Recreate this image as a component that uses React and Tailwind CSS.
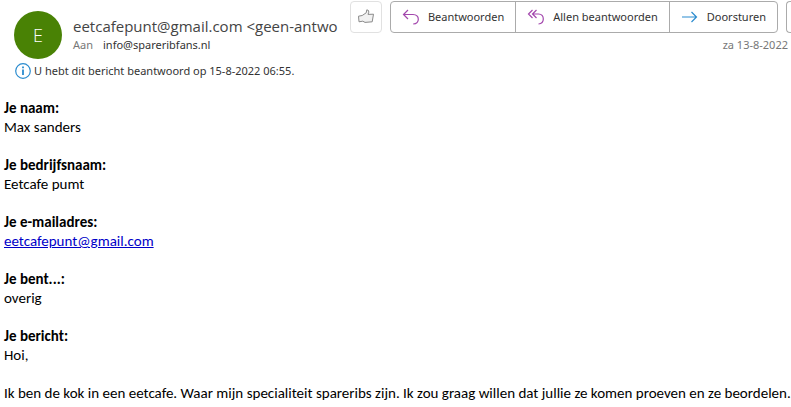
const fields = [
  { label: "Je naam:", value: "Max sanders" },
  { label: "Je bedrijfsnaam:", value: "Eetcafe pumt" },
  { label: "Je e-mailadres:", value: "eetcafepunt@gmail.com", isLink: true },
  { label: "Je bent...:", value: "overig" },
  { label: "Je bericht:", value: "Hoi," },
];

const ThumbIcon = () => (
  <svg width="18" height="18" viewBox="0 0 18 18" fill="#f1f1f1" stroke="#8a8a8a" strokeLinejoin="round">
    <path d="M1.5 8.2L5.2 7.5L9.2 4.8L9.8 1.8Q12.2 2 11.8 4.2L11 6.4L16.5 6.2L15.2 13.8L8 14.4L5.8 13.2L2 13.8Z" />
  </svg>
);

const ReplyIcon = () => (
  <svg width="18" height="18" viewBox="0 0 18 18" fill="none" stroke="#a347ad" strokeWidth="1.2">
    <path d="M6 2L1.5 6.5L6 11M1.5 6.5H11Q16.3 6.8 16.3 11.2Q16.3 15.6 11.2 16" />
  </svg>
);

const ReplyAllIcon = () => (
  <svg width="18" height="18" viewBox="0 0 18 18" fill="none" stroke="#a347ad" strokeWidth="1.2">
    <path d="M5.5 2L1.5 6L5.5 10M9.5 2L5.5 6L9.5 10M5.5 6H11.5Q16.3 6.3 16.3 11Q16.3 15.6 11.5 16" />
  </svg>
);

const ForwardIcon = () => (
  <svg width="18" height="18" viewBox="0 0 18 18" fill="none" stroke="#2b8ccf" strokeWidth="1.2">
    <path d="M1 9H15.5M10.5 4L15.5 9L10.5 14" />
  </svg>
);

const InfoIcon = () => (
  <svg width="16" height="16" viewBox="0 0 16 16" fill="none" stroke="#2b8ccf" className="shrink-0">
    <circle cx="8" cy="8" r="7.3" strokeWidth="1.2" />
    <path d="M8 6.5V12M8 3.5V5.2" strokeWidth="1.8" />
  </svg>
);

const actions = [
  { label: "Beantwoorden", icon: <ReplyIcon /> },
  { label: "Allen beantwoorden", icon: <ReplyAllIcon /> },
  { label: "Doorsturen", icon: <ForwardIcon /> },
];

const Header = () => (
  <header className="flex justify-between font-['Noto_Sans',sans-serif] text-[11px] text-[#333]">
    <div className="flex min-w-0 gap-[11px] pl-[14px] pt-[11px]">
      <div className="flex size-12 shrink-0 items-center justify-center rounded-full bg-[#498205] font-['Open_Sans',sans-serif] text-lg font-light text-white">
        E
      </div>
      <div className="min-w-0 whitespace-nowrap pt-1">
        <h1 className="font-['Open_Sans',sans-serif] text-[15px] leading-[22px] text-[#444]">
          eetcafepunt@gmail.com &lt;geen-antwo
        </h1>
        <p className="flex gap-[10px] leading-4">
          <span className="text-[#777]">Aan</span>
          <span>info@spareribfans.nl</span>
        </p>
      </div>
    </div>

    <div className="shrink-0 pt-px">
      <div className="flex">
        <button
          type="button"
          aria-label="Vind ik leuk"
          className="mr-2 flex size-8 items-center justify-center rounded border border-[#e1e1e1]"
        >
          <ThumbIcon />
        </button>
        <div className="mr-2 flex h-8 divide-x divide-[#ababab] rounded border border-[#ababab]">
          {actions.map((action) => (
            <button key={action.label} type="button" className="flex items-center gap-2 whitespace-nowrap px-[11px]">
              {action.icon}
              {action.label}
            </button>
          ))}
        </div>
        <button type="button" aria-label="Meer acties" className="h-8 w-[5px] rounded-l border border-r-0 border-[#ababab]" />
      </div>
      <p className="pr-[3px] pt-1 text-right leading-4 text-[#777]">za 13-8-2022</p>
    </div>
  </header>
);

export default function App() {
  return (
    <div className="min-h-screen bg-white">
      <Header />
      <div className="flex items-center gap-[3px] pl-[15px] pt-1 font-['Noto_Sans',sans-serif] text-[11px] leading-4 text-[#333]">
        <InfoIcon />
        <p>U hebt dit bericht beantwoord op 15-8-2022 06:55.</p>
      </div>

      <main className="flex flex-col gap-[19px] pl-1 pt-5 font-[Carlito,Lato,sans-serif] text-[15px] leading-[19px] text-black">
        {fields.map((field) => (
          <div key={field.label}>
            <p className="font-bold">{field.label}</p>
            {field.isLink ? (
              <p>
                <a href={`mailto:${field.value}`} className="text-[#0000c8] underline">
                  {field.value}
                </a>
              </p>
            ) : (
              <p>{field.value}</p>
            )}
          </div>
        ))}
        <p>
          Ik ben de kok in een eetcafe. Waar mijn specialiteit spareribs zijn. Ik zou graag willen dat jullie ze komen
          proeven en ze beordelen.
        </p>
      </main>
    </div>
  );
}
